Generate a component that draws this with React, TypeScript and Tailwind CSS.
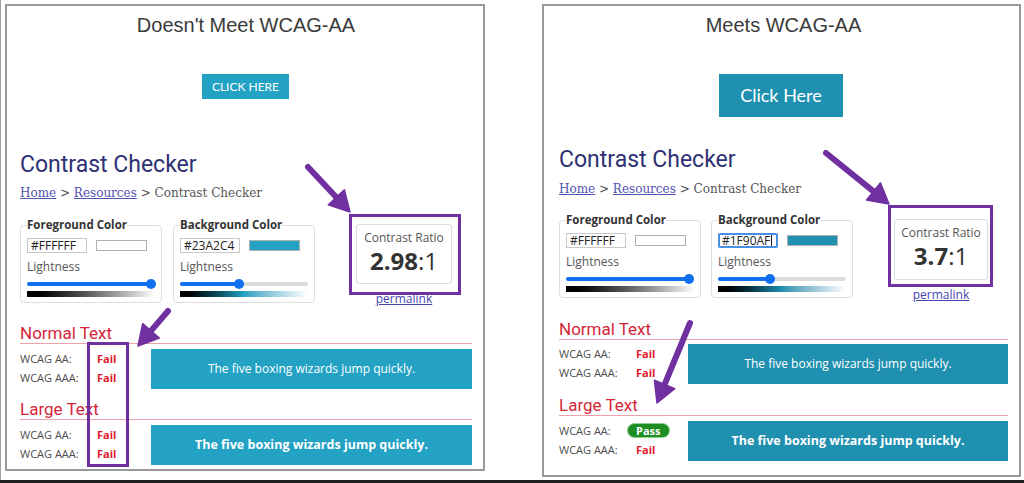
import React from "react";

type Status = "Pass" | "Fail";

function Stat({ s }: { s: Status }) {
  if (s === "Pass") {
    return (
      <span className="inline-flex h-[15px] items-center rounded-full border border-[#8fd08f] bg-[#1c8e22] px-[8px] text-[11px] font-bold leading-[13px] text-white">
        Pass
      </span>
    );
  }
  return <span className="px-[9px] font-bold text-[#e0182c]">Fail</span>;
}

function Slider({ fill }: { fill: number }) {
  return (
    <div className="relative mt-[4px] h-[10px]">
      <div className="absolute inset-x-0 top-[3px] h-[4px] rounded-full bg-[#dcdcdc]" />
      <div className="absolute left-0 top-[3px] h-[4px] rounded-full bg-[#1170f0]" style={{ width: fill }} />
      <div className="absolute top-0 h-[10px] w-[10px] rounded-full bg-[#1170f0]" style={{ left: fill - 5 }} />
    </div>
  );
}

function ColorBox({
  label,
  hex,
  swatch,
  fill,
  gradient,
  focused,
  extra,
}: {
  label: string;
  hex: string;
  swatch: string;
  fill: number;
  gradient: React.ReactNode;
  focused?: boolean;
  extra?: string;
}) {
  return (
    <fieldset className={`w-[142px] rounded-[4px] border border-[#dedede] px-[6px] pb-[5px] ${extra ?? ""}`}>
      <legend className="p-0 text-[11.5px] font-bold leading-[14px] text-[#333]">{label}</legend>
      <div className="mt-[6px] flex items-center">
        {focused ? (
          <div className="flex h-[15px] w-[60px] items-center rounded-[2px] border-2 border-[#4a8fe6] px-[2px] text-[12px] leading-[13px] text-[#222]">
            {hex}
            <span className="ml-[1px] h-[11px] w-[1px] bg-[#222]" />
          </div>
        ) : (
          <div className="flex h-[15px] w-[60px] items-center border border-[#c8c8c8] px-[3px] text-[12px] leading-[13px] text-[#222]">
            {hex}
          </div>
        )}
        <div className="ml-[9px] h-[11px] w-[51px] border border-[#b0b0b0]" style={{ backgroundColor: swatch }} />
      </div>
      <div className="mt-[6px] text-[12px] leading-[16px] text-[#555]">Lightness</div>
      <Slider fill={fill} />
      {gradient}
    </fieldset>
  );
}

function Section({
  title,
  mt,
  aa,
  aaa,
  color,
  bold,
  labelW,
  sampleMt,
}: {
  title: string;
  mt: string;
  aa: Status;
  aaa: Status;
  color: string;
  bold?: boolean;
  labelW: string;
  sampleMt: string;
}) {
  return (
    <div className={mt}>
      <div className="border-b border-[#eba2aa] font-['Roboto',sans-serif] text-[17px] leading-[20px] text-[#d3263a]">{title}</div>
      <div className={`${sampleMt} flex`}>
        <div className={`${labelW} text-[11px] leading-[19px]`}>
          <div className="flex items-center">
            <span className="w-[68px] text-[#4d4d4d]">WCAG AA:</span>
            <Stat s={aa} />
          </div>
          <div className="flex items-center">
            <span className="w-[68px] text-[#4d4d4d]">WCAG AAA:</span>
            <Stat s={aaa} />
          </div>
        </div>
        <div
          className={`flex h-[40px] flex-1 items-center justify-center text-white ${bold ? "text-[12.5px] font-bold" : "text-[12px]"}`}
          style={{ backgroundColor: color }}
        >
          The five boxing wizards jump quickly.
        </div>
      </div>
    </div>
  );
}

function Checker({
  headMt,
  crumbMt,
  rowMt,
  fg,
  bg,
  bgColor,
  fgFill,
  bgFill,
  focused,
  ratio,
  gap,
  ratioW,
  ratioH,
  gradient,
}: {
  headMt: string;
  crumbMt: string;
  rowMt: string;
  fg: string;
  bg: string;
  bgColor: string;
  fgFill: number;
  bgFill: number;
  focused?: boolean;
  ratio: string;
  gap: string;
  ratioW: string;
  ratioH: string;
  gradient: React.ReactNode;
}) {
  return (
    <>
      <h2 className={`${headMt} font-['Roboto',sans-serif] text-[23px] leading-[28px] text-[#2e3173]`}>Contrast Checker</h2>
      <div className={`${crumbMt} font-['DejaVu_Serif',serif] text-[12px] leading-[16px] text-[#555]`}>
        <span className="text-[#5252b0] underline">Home</span> &gt; <span className="text-[#5252b0] underline">Resources</span> &gt; Contrast
        Checker
      </div>
      <div className={`${rowMt} flex items-start`}>
        <ColorBox
          label="Foreground Color"
          hex={fg}
          swatch="#ffffff"
          fill={fgFill}
          gradient={<div className="mt-[2px] h-[6px] bg-linear-to-r from-black to-white" />}
        />
        <ColorBox
          label="Background Color"
          hex={bg}
          swatch={bgColor}
          fill={bgFill}
          focused={focused}
          extra={gap}
          gradient={gradient}
        />
        <div className={`ml-[41px] mt-[6px] flex flex-col items-center ${ratioW}`}>
          <div className={`flex w-full flex-col items-center rounded-[3px] border border-[#dcdcdc] pt-[5px] ${ratioH}`}>
            <div className="text-[12px] leading-[16px] text-[#555]">Contrast Ratio</div>
            <div className="mt-[1px] text-[24px] leading-[28px] text-[#333]">
              <span className="font-bold">{ratio}</span>:1
            </div>
          </div>
          <div className="mt-[7px] text-[12px] leading-[16px] text-[#4646b0] underline">permalink</div>
        </div>
      </div>
    </>
  );
}

function Arrow({ s, t }: { s: [number, number]; t: [number, number] }) {
  const dx = t[0] - s[0];
  const dy = t[1] - s[1];
  const len = Math.hypot(dx, dy);
  const ux = dx / len;
  const uy = dy / len;
  const nx = -uy;
  const ny = ux;
  const L = 20;
  const H = 11;
  const bx = t[0] - ux * L;
  const by = t[1] - uy * L;
  const pts = `${t[0]},${t[1]} ${bx + nx * H},${by + ny * H} ${bx - nx * H},${by - ny * H}`;
  return (
    <g>
      <line x1={s[0]} y1={s[1]} x2={bx + ux * 4} y2={by + uy * 4} stroke="#7030a0" strokeWidth={6} strokeLinecap="round" />
      <polygon points={pts} fill="#7030a0" strokeLinejoin="round" stroke="#7030a0" strokeWidth={1.5} />
    </g>
  );
}

export default function App() {
  return (
    <div className="relative flex h-[483px] w-[1024px] flex-col overflow-hidden bg-white font-['Open_Sans',sans-serif]">
      <div className="flex flex-1 items-start border-l border-[#a0a0a0]">
        {/* Left panel */}
        <div className="ml-[4px] mt-[4px] flex h-[467px] w-[480px] flex-col border-2 border-[#9a9a9a] pl-[13px] pr-[11px]">
          <div className="pt-[7px] text-center font-['Liberation_Sans',sans-serif] text-[20px] leading-[24px] text-[#3a3a3a]">
            Doesn't Meet WCAG-AA
          </div>
          <div className="ml-[182px] mt-[37px] flex h-[25px] w-[87px] items-center justify-center bg-[#23A2C4] font-['Lato',sans-serif] text-[12px] text-white">
            CLICK HERE
          </div>
          <Checker
            headMt="mt-[52px]"
            crumbMt="mt-[6px]"
            rowMt="mt-[17px]"
            fg="#FFFFFF"
            bg="#23A2C4"
            bgColor="#23A2C4"
            fgFill={124}
            bgFill={59}
            ratio="2.98"
            gap="ml-[11px]"
            ratioW="w-[96px]"
            ratioH="h-[60px]"
            gradient={<div className="mt-[2px] h-[6px] bg-linear-to-r from-black via-[#23A2C4] to-white" />}
          />
          <Section title="Normal Text" mt="mt-[16px]" aa="Fail" aaa="Fail" color="#23A2C4" labelW="w-[131px]" sampleMt="mt-[5px]" />
          <Section title="Large Text" mt="mt-[10px]" aa="Fail" aaa="Fail" color="#23A2C4" bold labelW="w-[131px]" sampleMt="mt-[5px]" />
        </div>

        {/* Right panel */}
        <div className="ml-[57px] mt-[4px] flex h-[473px] w-[479px] flex-col border-2 border-[#9a9a9a] pl-[15px] pr-[11px]">
          <div className="pt-[7px] text-center font-['Liberation_Sans',sans-serif] text-[20px] leading-[24px] text-[#3a3a3a]">
            Meets WCAG-AA
          </div>
          <div className="ml-[160px] mt-[37px] flex h-[43px] w-[124px] items-center justify-center bg-[#1F90AF] font-['Lato',sans-serif] text-[18px] text-white">
            Click Here
          </div>
          <Checker
            headMt="mt-[29px]"
            crumbMt="mt-[7px]"
            rowMt="mt-[16px]"
            fg="#FFFFFF"
            bg="#1F90AF"
            bgColor="#1F90AF"
            fgFill={123}
            bgFill={52}
            focused
            ratio="3.7"
            gap="ml-[10px]"
            ratioW="w-[94px]"
            ratioH="h-[61px]"
            gradient={<div className="mt-[2px] h-[6px] bg-linear-to-r from-black via-[#1F90AF] to-white" />}
          />
          <Section title="Normal Text" mt="mt-[16px]" aa="Fail" aaa="Fail" color="#1F90AF" labelW="w-[129px]" sampleMt="mt-[4px]" />
          <Section title="Large Text" mt="mt-[11px]" aa="Pass" aaa="Fail" color="#1F90AF" bold labelW="w-[129px]" sampleMt="mt-[5px]" />
        </div>
      </div>
      <div className="h-[3px] bg-[#1e1e1e]" />

      {/* Annotation overlays */}
      <div className="pointer-events-none absolute left-[349px] top-[214px] h-[81px] w-[112px] border-[3px] border-[#7030a0]" />
      <div className="pointer-events-none absolute left-[87px] top-[342px] h-[125px] w-[42px] border-[3px] border-[#7030a0]" />
      <div className="pointer-events-none absolute left-[888px] top-[205px] h-[82px] w-[105px] border-[3px] border-[#7030a0]" />
      <svg className="pointer-events-none absolute left-0 top-0" width={1024} height={483}>
        <Arrow s={[308, 167]} t={[350, 212]} />
        <Arrow s={[168, 311]} t={[138, 346]} />
        <Arrow s={[826, 153]} t={[889, 204]} />
        <Arrow s={[690, 323]} t={[657, 403]} />
      </svg>
    </div>
  );
}
